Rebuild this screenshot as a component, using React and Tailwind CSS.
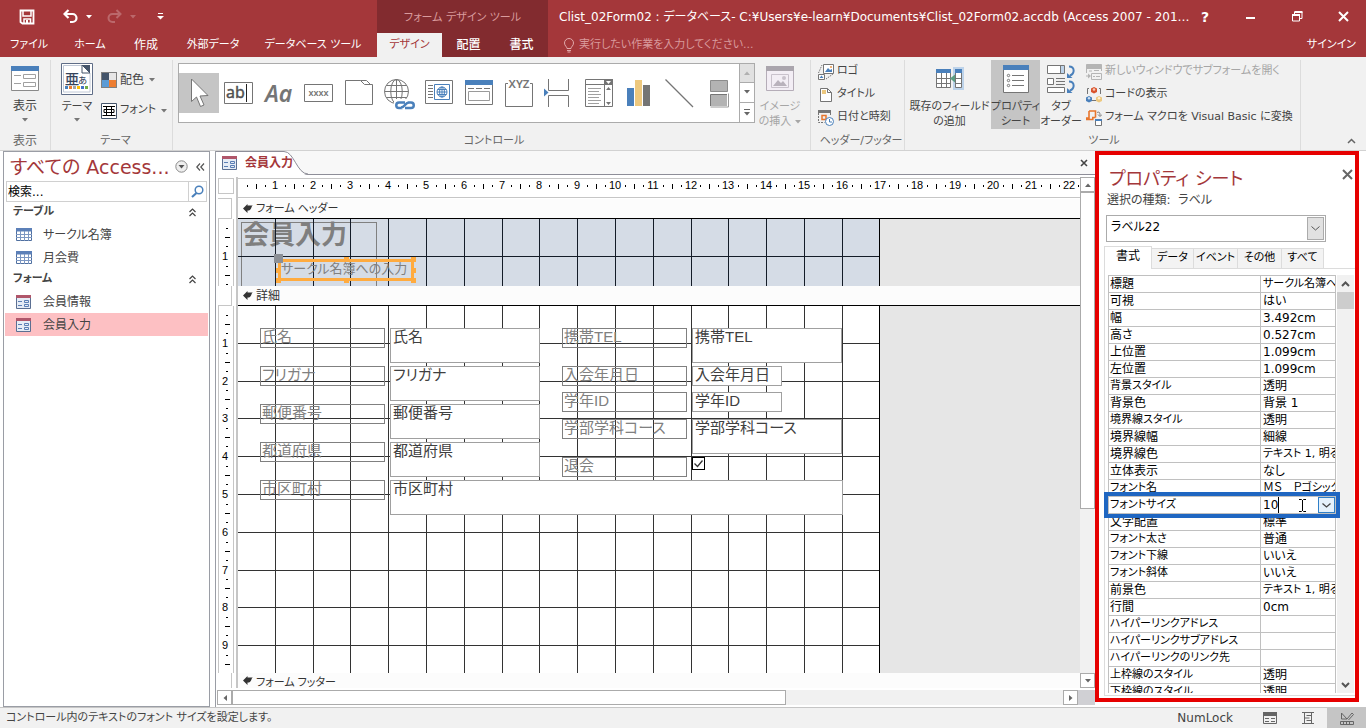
import React from "react";

/* ---------- shared bits ---------- */

const G = "#757575";
const B = "#4a80bb";

function Caret({ className = "" }) {
  return (
    <svg width="6" height="4" viewBox="0 0 6 4" className={className} aria-hidden="true">
      <path d="M0 0h6L3 3.5z" fill="currentColor" />
    </svg>
  );
}

function Svg({ w = 40, h = w, children, className = "shrink-0" }) {
  return (
    <svg width={w} height={h} viewBox={`0 0 ${w} ${h}`} className={className} fill="none" aria-hidden="true">
      {children}
    </svg>
  );
}

/* ---------- title bar ---------- */

const MAIN_TABS = [
  ["ファイル", "w-[58px]"],
  ["ホーム", "w-16"],
  ["作成", "w-12 text-xs"],
  ["外部データ", "w-[86px]"],
  ["データベース ツール", "w-[114px]"],
];

function QuickAccess() {
  return (
    <div className="flex h-[33px] items-center pl-[19px]">
      <button aria-label="上書き保存" className="flex w-10">
        <Svg w={16}>
          <path d="M2 1.5h12.5v13H3.5L1.5 13V1.5z" stroke="#fff" strokeWidth="1.8" />
          <path d="M4 2v5h8V2M5 14.500V10h6.500v4.500" stroke="#fff" strokeWidth="1.5" />
          <path d="M7 11h2v3H7z" fill="#fff" />
        </Svg>
      </button>
      <button aria-label="元に戻す" className="ml-1 flex w-[42px] items-center gap-2 text-white">
        <Svg w={15}>
          <path d="M5.500 1L1.500 5l4 4M2 5h7.500a4 4 0 0 1 0 8H7" stroke="#fff" strokeWidth="2.200" />
        </Svg>
        <Caret />
      </button>
      <button aria-label="やり直し" className="ml-0.5 flex w-12 items-center gap-2 text-[#bb686b]">
        <Svg w={15}>
          <path d="M9.500 1l4 4-4 4M13 5H5.500a4 4 0 0 0 0 8H8" stroke="#bb686b" strokeWidth="2" />
        </Svg>
        <Caret />
      </button>
      <button aria-label="カスタマイズ" className="ml-0.5 text-white">
        <Svg w={7} h={7}>
          <path d="M1 .5h5" stroke="#fff" />
          <path d="M0 3h7L3.500 6.500z" fill="#fff" />
        </Svg>
      </button>
    </div>
  );
}

function TitleBar() {
  return (
    <header className="flex h-[57px] shrink-0 bg-[#a4373a] text-white">
      <div className="w-[377px] shrink-0">
        <QuickAccess />
        <nav className="flex h-6 text-[11px]">
          {MAIN_TABS.map(([t, w]) => (
            <button key={t} className={`${w} whitespace-nowrap text-center`}>{t}</button>
          ))}
        </nav>
      </div>
      <div className="w-[171px] shrink-0 bg-[#822b2f]">
        <div className="h-[33px] pt-0.5 text-center text-[11px] leading-[32px] text-[#d99a9c]">フォーム デザイン ツール</div>
        <nav className="flex h-6">
          <button className="w-[65px] bg-[#f1f1f1] text-[11px] text-[#a4373a]">デザイン</button>
          <button className="flex-1 font-medium">配置</button>
          <button className="flex-1 font-medium">書式</button>
        </nav>
      </div>
      <div className="min-w-0 flex-1">
        <div className="flex h-[33px] items-center">
          <h1 className="min-w-0 flex-1 whitespace-nowrap pl-[11px]">
            Clist_02Form02 : データベース- C:¥Users¥e-learn¥Documents¥Clist_02Form02.accdb (Access 2007 - 201…
          </h1>
          <button className="w-[46px] text-sm font-bold" aria-label="ヘルプ">?</button>
          <button className="flex w-[46px] justify-center" aria-label="最小化">
            <Svg w={10}><path d="M0 6h9" stroke="#fff" strokeWidth="2" /></Svg>
          </button>
          <button className="flex w-[46px] justify-center" aria-label="元に戻す (縮小)">
            <Svg w={11}>
              <path d="M.5 4h7v6h-7zM2.500 4V1h7.500v6.500H7.500" stroke="#fff" />
              <path d="M0 4h8M2.500 1h8" stroke="#fff" strokeWidth="2" />
            </Svg>
          </button>
          <button className="flex w-[46px] justify-center" aria-label="閉じる">
            <Svg w={11}><path d="M1 1l9 9M10 1l-9 9" stroke="#fff" strokeWidth="2" /></Svg>
          </button>
        </div>
        <div className="flex h-6 items-center pl-[15px] pr-[10px] text-[11px]">
          <Svg w={12} h={15}>
            <path d="M4 10.500C4 8.500 1.500 8 1.500 5a4.500 4.500 0 0 1 9 0c0 3-2.500 3.500-2.500 5.500zM4 12.500h4M4.500 14h3" stroke="#e0a9ab" />
          </Svg>
          <input
            aria-label="操作アシスト"
            placeholder="実行したい作業を入力してください..."
            className="ml-1 min-w-0 flex-1 bg-transparent text-white outline-none placeholder:text-[#d99a9c]"
          />
          <button>サインイン</button>
        </div>
      </div>
    </header>
  );
}

/* ---------- ribbon ---------- */

const Globe = ({ cx, cy, r, c }) => (
  <g stroke={c}>
    <circle cx={cx} cy={cy} r={r} />
    <ellipse cx={cx} cy={cy} rx={r * 0.48} ry={r} />
    <path d={`M${cx} ${cy - r}V${cy + r}M${cx - r} ${cy}H${cx + r}M${cx - r * 0.86} ${cy - r / 2}H${cx + r * 0.86}M${cx - r * 0.86} ${cy + r / 2}H${cx + r * 0.86}`} />
  </g>
);

const GALLERY = [
  ["選択", <path d="M12.500 6v22.500l5-4.500 4 9.500 3.500-1.500-4-9 8-.5z" fill="#fff" stroke={G} />],
  ["テキスト ボックス", <>
    <path d="M5.500 9.500h28v21h-28z" stroke={G} />
    <text x="7" y="25" fontSize="16" fill="#505050" stroke="#505050" strokeWidth=".4" fontFamily="Noto Sans">ab</text>
    <path d="M27.500 11v18" stroke="#222" />
  </>],
  ["ラベル", <text x="6" y="29" fontSize="23" fontStyle="italic" fontWeight="600" fill={G} fontFamily="Noto Sans">Aa</text>],
  ["ボタン", <>
    <path d="M5.500 11.500h28v17h-28z" stroke={G} />
    <text x="19.500" y="23" fontSize="9" textAnchor="middle" fontWeight="600" fill={G} fontFamily="Noto Sans">xxxx</text>
  </>],
  ["タブ コントロール", <path d="M6.500 31.500V7.500h15l4 4h8v20zM21.500 7.500h6l4 4" stroke={G} />],
  ["ハイパーリンク", <>
    <Globe cx={17.5} cy={18.5} r={12} c={G} />
    <path d="M15 26h22v11H15z" fill="#fff" />
    <path d="M26 29.500h-6a2.700 2.700 0 0 0 0 5.500h3.500M26 35h6a2.700 2.700 0 0 0 0-5.500h-3.500M22 34.500c4 0 4-5 8-5" stroke={B} strokeWidth="2.500" />
  </>],
  ["Web ブラウザー", <>
    <path d="M6.500 7.500h27v23h-27z" stroke={G} />
    <path d="M9 12.500h5M9 15.500h5M9 18.500h5M9 21.500h5M9 24.500h5" stroke={G} />
    <path d="M15.500 11.500h15v15h-15z" stroke={B} />
    <Globe cx={23} cy={19} r={5} c={B} />
  </>],
  ["ナビゲーション", <>
    <path d="M6.500 7.500h27v24h-27z" stroke={G} />
    <path d="M6 7h28v5H6z" fill={B} />
    <path d="M9 15.500h6M17 15.500h6M25 15.500h6" stroke={G} />
    <path d="M9.500 18.500h21v9h-21z" stroke="#9a9a9a" />
  </>],
  ["オプション グループ", <>
    <path d="M9 10.500H6.500v23h27v-23H31" stroke={G} />
    <text x="20" y="15" fontSize="11.500" textAnchor="middle" fontWeight="600" fill={G} fontFamily="Noto Sans">XYZ</text>
  </>],
  ["改ページ", <>
    <path d="M9.500 6v11.500h20V6M9.500 34V22.500h20V34" stroke={G} />
    <path d="M5 15.500v8l4.500-4z" fill={B} />
  </>],
  ["コンボ ボックス", <>
    <path d="M6.500 6.500h27v27h-27zM6.500 11.500h19M25.500 6.500v27" stroke={G} />
    <path d="M25 6h9v6h-9z" fill={G} />
    <path d="M27 8h5l-2.500 3z" fill="#fff" />
    <path d="M9 15.500h13M9 18.500h11M9 21.500h13M9 24.500h11M9 27.500h13M9 30.500h11" stroke="#a0a0a0" />
    <path d="M27 17h5l-2.500-3zM27 29h5l-2.500 3z" fill={G} />
  </>],
  ["グラフ", <>
    <path d="M8 15h7v18H8z" fill={B} />
    <path d="M16 7h7v26h-7z" fill="#edc87e" />
    <path d="M24 12h7v21h-7z" fill={G} />
  </>],
  ["線", <path d="M6.500 6.500l27.500 27.500" stroke={G} strokeWidth="1.200" />],
  ["トグル ボタン", <>
    <path d="M11.500 7.500h17v11h-17z" fill="#b3b3b3" stroke="#8c8c8c" />
    <path d="M12 22h16v11H12z" fill="#b3b3b3" />
    <path d="M11.500 33V21.500H28" stroke={G} />
    <path d="M29.500 20.500v13.500h-18" stroke="#9a9a9a" />
  </>],
];

function Gallery() {
  return (
    <div className="flex h-[60px] border border-[#ababab] bg-white">
      <div className="flex items-center">
        {GALLERY.map(([name, art], i) => (
          <button key={name} aria-label={name} className={i === 0 ? "bg-[#c5c5c5]" : ""}>
            <Svg w={40}>{art}</Svg>
          </button>
        ))}
      </div>
      <div className="grid w-[15px] grid-rows-3 divide-y divide-[#ababab] border-l border-[#ababab] text-[#666]">
        <button aria-label="上へ" className="flex items-center justify-center bg-[#e1e1e1] text-[#b0b0b0]"><Caret className="rotate-180" /></button>
        <button aria-label="下へ" className="flex items-center justify-center"><Caret /></button>
        <button aria-label="その他" className="flex flex-col items-center justify-center gap-0.5"><span className="h-px w-1.5 bg-[#666]" /><Caret /></button>
      </div>
    </div>
  );
}

function Group({ label, className, children }) {
  return (
    <section className={`flex flex-col border-r border-[#dcdcdc] ${className}`}>
      <div className="flex flex-1">{children}</div>
      <div className="h-[18px] whitespace-nowrap text-center leading-[18px] text-[#666]">{label}</div>
    </section>
  );
}

function SmallButton({ icon, children, muted, caret }) {
  return (
    <button className={`flex h-[23px] items-center gap-[3px] whitespace-nowrap ${muted ? "text-[#a6a6a6]" : "text-[#444]"}`}>
      {icon}
      {children}
      {caret && <Caret className="ml-0.5 text-[#777]" />}
    </button>
  );
}

function BigButton({ icon, lines, caret, inlineCaret, className = "", muted }) {
  return (
    <button className={`flex h-[69px] flex-col items-center whitespace-nowrap pt-[3px] leading-[15px] ${muted ? "text-[#a6a6a6]" : "text-[#444]"} ${className}`}>
      <span className="mb-1 flex h-8 items-center">{icon}</span>
      {lines.map((l, i) => (
        <span key={l} className="flex items-center gap-1">
          {l}
          {inlineCaret && i === lines.length - 1 && <Caret />}
        </span>
      ))}
      {caret && <Caret className="mt-1 text-[#777]" />}
    </button>
  );
}

function Ribbon() {
  return (
    <div className="flex h-[94px] shrink-0 border-b border-[#d2d2d2] bg-[#f1f1f1] pt-[3px] text-[11px] text-[#444]">
      <Group label="表示" className="w-[51px] shrink-0 text-xs">
        <BigButton className="w-full" lines={["表示"]} caret icon={
          <Svg w={28} h={26}>
            <path d="M.5.5h27v24H.5z" fill="#fff" stroke="#8a8a8a" />
            <path d="M0 0h28v5H0z" fill={B} />
            <path d="M3 9.500h7M3 17.500h7M12.500 8.500h12v4h-12zM12.500 16.500h12v4h-12z" stroke="#a0a0a0" />
          </Svg>
        } />
      </Group>
      <Group label="テーマ" className="w-[122px] shrink-0 pl-2">
        <BigButton className="ml-0.5 w-8" lines={["テーマ"]} caret icon={
          <Svg w={32}>
            <path d="M.5.5h31v31H.5z" fill="#fff" stroke="#5f6d87" />
            <path d="M2.500 2.500h19l7.500 7.500v19h-26.500z" stroke="#c0c8d6" />
            <path d="M21 2h8v8h-8z" fill="#44546a" /><path d="M21 2v8h8z" fill="#fff" stroke="#44546a" />
            <text x="4" y="21" fontSize="14" fill="#34425a" stroke="#34425a" strokeWidth=".3" fontFamily="Noto Sans CJK JP">亜</text>
            <text x="17" y="21" fontSize="11" fill="#34425a" fontFamily="Noto Sans CJK JP">ぁ</text>
            <path d="M4 23h3v3H4z" fill={B} /><path d="M8 23h3v3H8z" fill="#ed7d31" />
            <path d="M12 23h3v3h-3z" fill="#a5a5a5" /><path d="M16 23h3v3h-3z" fill="#ffc000" />
            <path d="M20 23h3v3h-3z" fill="#4472c4" /><path d="M24 23h3v3h-3z" fill="#70ad47" />
          </Svg>
        } />
        <div className="ml-2 flex flex-col gap-2 pt-2">
          <SmallButton caret icon={
            <Svg w={16}>
              <path d="M0 0h16v16H0z" fill="#7f7f7f" />
              <path d="M1 1h7v7H1z" fill="#44546a" /><path d="M8 1h7v7H8z" fill="#e7e6e6" />
              <path d="M1 8h7v7H1z" fill="#5b9bd5" /><path d="M8 8h7v7H8z" fill="#ed7d31" />
            </Svg>
          }><span className="text-xs">配色</span></SmallButton>
          <SmallButton caret icon={
            <Svg w={16}>
              <path d="M.5.5h15v15H.5z" fill="#fff" stroke="#44546a" />
              <path d="M2 3.500h12M5.500 3.500v9M10.500 3.500v9M3 6.500h10v3H3zM1.500 12.500h13" stroke="#000" />
            </Svg>
          }>フォント</SmallButton>
        </div>
      </Group>
      <Group label="コントロール" className="w-[638px] shrink-0 pl-[5px]">
        <div className="pt-[3px]"><Gallery /></div>
        <BigButton muted inlineCaret className="w-[50px]" lines={["イメージ", "の挿入"]} icon={
          <Svg w={28} h={26}>
            <path d="M.5.5h27v24H.5z" fill="#f3eef5" stroke="#b5adb8" />
            <path d="M0 0h28v5H0z" fill="#aaa5ad" />
            <path d="M5.500 8.500h17v13h-17z" stroke="#c9c2cc" />
            <path d="M7 20l5-6 3 3 2-2 4 5z" fill="#b9b2bc" /><circle cx="18" cy="12" r="2" fill="#c9c2cc" />
          </Svg>
        } />
      </Group>
      <Group label="ヘッダー/フッター" className="w-[94px] shrink-0 pl-[7px]">
        <div className="flex flex-col">
          <SmallButton icon={
            <Svg w={16}>
              <path d="M5.500.5h10v9h-10z" fill="#fff" stroke={G} />
              <path d="M7 8l3-4 2 2 2-1v3z" fill={B} /><circle cx="13" cy="3" r="1" fill="#ed9b4e" />
              <path d="M.5 10.500h6v5h-6z" fill="#fff" stroke={G} />
              <path d="M1.500 14l2-2.500 2 2.500z" fill={B} />
              <path d="M.5 9L4 1M8 15l7-5" stroke={G} strokeDasharray="1.500 1" />
            </Svg>
          }>ロゴ</SmallButton>
          <SmallButton icon={
            <Svg w={16}>
              <path d="M2.500 1.500h7l4 4v9h-11z" fill="#fff" stroke={G} /><path d="M9.500 1.500v4h4" stroke={G} />
              <path d="M4 3h4v4H4z" fill="#edc87e" />
            </Svg>
          }>タイトル</SmallButton>
          <SmallButton icon={
            <Svg w={16}>
              <path d="M0 0h13v3H0z" fill={G} /><path d="M.5 3v9.500h6M12.500 3v3" stroke={G} strokeDasharray="2 1" />
              <path d="M4 5.500h4v4H4z" stroke="#e8762d" strokeWidth="1.500" />
              <circle cx="11.500" cy="11.500" r="4" fill="#fff" stroke={B} /><path d="M11.500 9v3h2.500" stroke={B} />
            </Svg>
          }>日付と時刻</SmallButton>
        </div>
      </Group>
      <Group label="ツール" className="w-[396px] shrink-0 pl-[3px]">
        <BigButton className="w-[83px]" lines={["既存のフィールド", "の追加"]} icon={
          <Svg w={28} h={24}>
            <path d="M17 0h11v23H17z" fill="#bdd3ea" />
            <path d="M.5 2.500h14v18H.5zM5.500 6v15M10.500 6v15M.5 11.500h14M.5 16.500h14M19.500 2.500h6v18h-6zM19.500 11.500h6M19.500 16.500h6" fill="#fff" stroke={G} />
            <path d="M0 2h15v4H0zM19 2h7v4h-7z" fill={B} /><path d="M19 7.500v8l-5-4z" fill="#5a9e83" />
          </Svg>
        } />
        <BigButton className="w-[49px] bg-[#c5c5c5]" lines={["プロパティ", "シート"]} icon={
          <Svg w={26} h={28}>
            <path d="M.5.5h25v27H.5z" fill="#fff" stroke={G} /><path d="M0 0h26v5H0z" fill={B} />
            <path d="M9 10.500h12M9 15.500h12M9 20.500h12" stroke={G} />
            <circle cx="5.500" cy="10.500" r="1.200" stroke={G} /><circle cx="5.500" cy="15.500" r="1.200" stroke={G} /><circle cx="5.500" cy="20.500" r="1.200" stroke={G} />
          </Svg>
        } />
        <BigButton className="w-[42px]" lines={["タブ", "オーダー"]} icon={
          <Svg w={28} h={29}>
            <path d="M.5.5h17v8H.5zM.5 13.500h6v6h-6zM.5 22.500h17v5H.5z" fill="#fff" stroke={G} />
            <path d="M14 1h3v7h-3z" fill="#bdd3ea" /><path d="M13.500 1v7M9 13.500h9M9 16.500h9M9 19.500h9" stroke={G} />
            <path d="M22 1.500c6 0 6 7 1 9M22 16.500c6 0 6 7 1 9" stroke={B} strokeWidth="2" />
            <path d="M20 8v5h5.500zM20 23v5h5.500z" fill={B} />
          </Svg>
        } />
        <div className="ml-1 flex flex-col">
          <SmallButton muted icon={
            <Svg w={16}>
              <path d="M.5.5h15v4H.5z" fill="#b5b5b5" stroke="#b5b5b5" /><path d="M.5 4v5M15.500 4v3M3 7h3M8 6.500h5" stroke="#b5b5b5" />
              <path d="M5.500 9.500h10v6h-10zM7 12.500h2M10 12.500h4M0 12h4" stroke="#b5b5b5" /><path d="M2 9.500l3 2.500-3 2.500z" fill="#b5b5b5" />
            </Svg>
          }>新しいウィンドウでサブフォームを開く</SmallButton>
          <SmallButton icon={
            <Svg w={16}>
              <path d="M3 1.500H1.500V7M13 1.500h1.500V7M6 13.500h4" stroke={G} />
              <path d="M8 0l3 1.500v3.500L8 6.500 5 5V1.500z" fill="#d9532c" /><circle cx="8" cy="2.500" r="1.300" fill="#f6c9b8" />
              <path d="M3 9l3 1.500V14l-3 1.500L0 14v-3.500z" fill={B} /><circle cx="3" cy="11.300" r="1.200" fill="#cfe0f2" />
              <path d="M13 9l3 1.500V14l-3 1.500-3-1.500v-3.500z" fill="#edc87e" /><circle cx="13" cy="11.300" r="1.200" fill="#fff2d6" />
            </Svg>
          }>コードの表示</SmallButton>
          <SmallButton icon={
            <Svg w={16}>
              <path d="M3 1h6.500v6.500M3 1v7H.8v1.500h6V7.500h2.700" stroke="#e8762d" strokeWidth="1.600" />
              <path d="M11 2.500c2.500-1 3 0 3 3M12 4.500l2 2 2-2" stroke={G} />
              <path d="M9.500 9.500h6v6h-6z" fill="#fff" stroke={G} /><path d="M9 9h7v2H9z" fill={B} />
            </Svg>
          }>フォーム マクロを Visual Basic に変換</SmallButton>
        </div>
      </Group>
      <div className="flex flex-1 items-end justify-end pb-1.5 pr-2.5">
        <button aria-label="リボンを折りたたむ"><Svg w={9} h={6}><path d="M1 5l3.500-3.500L8 5" stroke="#666" strokeWidth="1.500" /></Svg></button>
      </div>
    </div>
  );
}

/* ---------- navigation pane ---------- */

function TableIcon() {
  return (
    <Svg w={16} h={13}>
      <path d="M.5.5h15v12H.5z" fill="#fff" stroke="#4f6f9f" /><path d="M0 0h16v3.500H0z" fill="#5c80b8" />
      <path d="M4.500 3v10M8.500 3v10M12.500 3v10M0 6.500h16M0 9.500h16" stroke="#7c97c2" />
    </Svg>
  );
}

function FormIcon() {
  return (
    <Svg w={15} h={14}>
      <path d="M.5.5h14v13H.5z" fill="#e6ecf5" stroke="#5b6f92" /><path d="M0 0h15v3H0z" fill="#b0566a" />
      <path d="M2 6.500h4M2 10.500h4M8.500 5.500h4v2h-4zM8.500 9.500h4v2h-4z" stroke="#5b7fb5" />
    </Svg>
  );
}

function NavSection({ title, Icon, items, selected }) {
  return (
    <section>
      <h3 className="flex h-[21px] items-center justify-between pl-[9px] pr-3 text-[11px] font-bold text-[#444]">
        {title}
        <Svg w={9} h={9}><path d="M1.500 4l3-3 3 3M1.500 8l3-3 3 3" stroke="#444" strokeWidth="1.200" /></Svg>
      </h3>
      <ul>
        {items.map((t) => (
          <li key={t}>
            <button className={`ml-px flex h-[23px] w-[203px] items-center pl-[11px] text-[#444] ${t === selected ? "bg-[#fdc0c3]" : ""}`}>
              <span className="w-[27px]"><Icon /></span>
              {t}
            </button>
          </li>
        ))}
      </ul>
    </section>
  );
}

function NavPane() {
  return (
    <aside className="ml-[3px] mr-[5px] w-[207px] shrink-0 border border-[#9a9da5] bg-white">
      <div className="flex h-[29px] items-center pl-1.5 text-[#a4373a]">
        <h2 className="flex-1 whitespace-nowrap text-[19px] leading-7">すべての Access...</h2>
        <button aria-label="メニュー" className="mr-2">
          <Svg w={13}><circle cx="6.500" cy="6.500" r="5.700" fill="#eee" stroke="#8a8a8a" /><path d="M3.500 5h6l-3 3.500z" fill="#555" /></Svg>
        </button>
        <button aria-label="折りたたむ" className="mr-1">
          <Svg w={9} h={8}><path d="M4 .5L.8 4 4 7.500M8 .5L4.800 4 8 7.500" stroke="#555" strokeWidth="1.200" /></Svg>
        </button>
      </div>
      <div className="mx-0.5 flex h-[21px] border border-[#d0d0d0]">
        <input aria-label="検索" placeholder="検索..." className="min-w-0 flex-1 px-px outline-none placeholder:text-black" />
        <button aria-label="検索開始" className="flex w-[18px] items-center justify-center border-l border-[#d0d0d0]">
          <Svg w={13}><circle cx="8" cy="5" r="3.800" stroke={B} strokeWidth="1.500" /><path d="M5.500 8L1 12" stroke={B} strokeWidth="2.200" /></Svg>
        </button>
      </div>
      <NavSection title="テーブル" Icon={TableIcon} items={["サークル名簿", "月会費"]} />
      <NavSection title="フォーム" Icon={FormIcon} items={["会員情報", "会員入力"]} selected="会員入力" />
    </aside>
  );
}

/* ---------- form designer ---------- */

const CM = 37.8;
const at = (n) => Math.round(n * CM) - 1;
const range = (n) => Array.from({ length: n }, (_, i) => i + 1);

function Grid({ rows, color }) {
  return (
    <svg className="absolute left-0 top-0 h-full w-[642px]" shapeRendering="crispEdges" aria-hidden="true">
      <g fill={color}>
        {range(16).map((n) => <rect key={n} x={at(n)} y="0" width="1" height="100%" />)}
        {range(rows).map((n) => <rect key={n} x="0" y={at(n)} width="100%" height="1" />)}
      </g>
      <rect x="641" y="0" width="1" height="100%" fill="#000" />
    </svg>
  );
}

function HRuler() {
  return (
    <svg className="h-full w-full" fontFamily="Liberation Sans" fontSize="11" textAnchor="middle" aria-hidden="true">
      {range(23).map((n) => {
        const x = at(n);
        return (
          <g key={n} fill="#000">
            <rect x={x - 28} y="6" width="1" height="2" />
            <rect x={x - 19} y="5" width="1" height="5" />
            <rect x={x - 10} y="6" width="1" height="2" />
            {n < 23 && <text x={x} y="10">{n}</text>}
          </g>
        );
      })}
    </svg>
  );
}

function VRuler({ rows, className }) {
  return (
    <div className={`border-x border-[#c6c6c6] bg-white ${className}`}>
      <svg className="h-full w-full" fontFamily="Liberation Sans" fontSize="11" textAnchor="middle" aria-hidden="true">
        {range(rows + 1).map((n) => {
          const y = at(n);
          return (
            <g key={n}>
              <rect x="7" y={y - 28} width="2" height="1" />
              <rect x="6" y={y - 19} width="5" height="1" />
              <rect x="7" y={y - 10} width="2" height="1" />
              {n <= rows && <text x="6" y={y + 4}>{n}</text>}
            </g>
          );
        })}
      </svg>
    </div>
  );
}

function SectionBar({ children, className = "" }) {
  return (
    <div className={`flex shrink-0 gap-[3px] bg-[#fcfcfc] pl-[5px] text-[#333] ${className}`}>
      <Svg w={10} h={9} className="shrink-0 self-center"><path d="M0 4.500L4.500 0v1.500H10C8 2 9 5.500 6 6.500H4.500V9z" fill="#333" /></Svg>
      {children}
    </div>
  );
}

const FIELDS = [
  ["氏名", "left-[22px] top-[22px]", "left-[152px] top-[22px] h-[35px] w-[150px]"],
  ["フリガナ", "left-[22px] top-[60px]", "left-[152px] top-[60px] h-[35px] w-[150px]"],
  ["郵便番号", "left-[22px] top-[98px]", "left-[152px] top-[98px] h-[35px] w-[150px]"],
  ["都道府県", "left-[22px] top-[136px]", "left-[152px] top-[136px] h-[35px] w-[150px]"],
  ["市区町村", "left-[22px] top-[174px]", "left-[152px] top-[174px] h-[35px] w-[453px]"],
  ["携帯TEL", "left-[324px] top-[22px]", "left-[454px] top-[22px] h-[35px] w-[150px]"],
  ["入会年月日", "left-[324px] top-[60px]", "left-[454px] top-[60px] h-5 w-[90px]"],
  ["学年ID", "left-[324px] top-[86px]", "left-[454px] top-[86px] h-5 w-[90px]"],
  ["学部学科コース", "left-[324px] top-[113px]", "left-[454px] top-[113px] h-[35px] w-[150px]"],
];

const LABEL = "absolute h-5 w-[125px] overflow-visible whitespace-nowrap border border-[#808080] pl-px text-[15px] leading-[15px] text-[#808080]";

const HANDLES = [
  "right-[-5px] top-[-5px]", "bottom-[-5px] left-[-5px]", "bottom-[-5px] right-[-5px]",
  "left-[63px] top-[-5px]", "bottom-[-5px] left-[63px]", "right-[-5px] top-[6px]", "left-[-5px] top-[6px]",
];

const PGOTHIC = "font-['Liberation_Sans','Noto_Sans_CJK_JP',sans-serif]";

function HeaderSection() {
  return (
    <div className="relative h-[67px] shrink-0 overflow-hidden bg-[#e6e6e6]">
      <div className="h-full w-[642px] bg-[#d5dce6]" />
      <div className="absolute left-[3px] top-[3px] h-20 w-[136px] border border-[#808080] pl-px text-[26px] font-bold leading-[25px] text-[#7f7f7f]">会員入力</div>
      <Grid rows={1} color="#141c28" />
      <div className="absolute left-[40px] top-[40px] h-[22px] w-[136px] border-[3px] border-[#ffab3f] text-[13px] leading-[13px] text-[#808080]">
        <span className="whitespace-nowrap">サークル名簿への入力</span>
        <span className="absolute left-[-7px] top-[-8px] size-[9px] bg-[#8b8f96]" />
        {HANDLES.map((p) => <span key={p} className={`absolute size-[5px] bg-[#ffab3f] ${p}`} />)}
      </div>
    </div>
  );
}

function DetailSection() {
  return (
    <div className="relative min-h-0 flex-1 overflow-hidden bg-[#e6e6e6]">
      <div className="h-full w-[642px] bg-white" />
      <Grid rows={9} color="#333" />
      {FIELDS.map(([name, l, f]) => (
        <React.Fragment key={name}>
          <label htmlFor={name} className={`${LABEL} ${l}`}>{name}</label>
          <textarea
            id={name}
            defaultValue={name}
            className={`absolute resize-none overflow-hidden whitespace-pre border border-[#a0a0a0] bg-white px-0.5 py-0 text-[15px] leading-[16px] text-[#404040] outline-none ${f}`}
          />
        </React.Fragment>
      ))}
      <label htmlFor="withdrawn" className={`${LABEL} left-[324px] top-[151px]`}>退会</label>
      <input
        id="withdrawn"
        type="checkbox"
        defaultChecked
        className="peer absolute left-[454px] top-[151px] size-[13px] appearance-none border border-black bg-white"
      />
      <svg className="pointer-events-none absolute left-[454px] top-[151px] hidden peer-checked:block" width="13" height="13" fill="none" aria-hidden="true">
        <path d="M2.500 6.500l3 3 5-6" stroke="#333" strokeWidth="1.300" />
      </svg>
    </div>
  );
}

const SB = "flex shrink-0 items-center justify-center border border-[#ababab] bg-white text-[#666]";

function Designer() {
  return (
    <main className="flex min-w-0 flex-1 flex-col border-l border-[#9a9da5] bg-white">
      <div className="flex h-6 shrink-0 items-center border-b border-[#8e8e98] bg-[#f8f8f8] pr-[7px]">
        <div className="relative h-6 flex-1">
          <svg className="absolute left-0 top-0" width="96" height="24" aria-hidden="true">
            <path d="M0 24V.5h68c10 0 13 23.500 24 23.500z" fill="#fff" />
            <path d="M0 .5h68c10 0 13 22.500 24 22.500" fill="none" stroke="#8e8e98" />
          </svg>
          <button className="relative flex h-6 items-center gap-2 pl-1.5 font-bold text-[#a4373a]">
            <FormIcon />
            会員入力
          </button>
        </div>
        <button aria-label="タブを閉じる"><Svg w={8}><path d="M1 1l6 6M7 1L1 7" stroke="#444" strokeWidth="1.600" /></Svg></button>
      </div>
      <div className="flex min-h-0 flex-1 pt-0.5">
        <div className="flex min-w-0 flex-1">
          <div className="flex w-[22px] shrink-0 flex-col border-r-2 border-[#c6c6c6] pl-0.5">
            <div className="mt-px h-4 w-4 border border-[#c6c6c6]" />
            <div className="mt-1 h-[21px] w-3.5 border-b border-r border-t border-[#c6c6c6]" />
            <VRuler rows={1} className="h-[67px] w-4" />
            <div className="h-5 w-3.5 border-b border-r border-[#c6c6c6]" />
            <VRuler rows={9} className="min-h-0 w-4 flex-1" />
            <div className="h-[15px] w-3.5 border-r border-[#c6c6c6]" />
          </div>
          <div className={`flex min-w-0 flex-1 flex-col ${PGOTHIC}`}>
            <div className="my-px h-5 shrink-0 overflow-hidden border-y border-[#c6c6c6]"><HRuler /></div>
            <SectionBar className="h-5 items-center border-b border-black text-[11px]">フォーム ヘッダー</SectionBar>
            <HeaderSection />
            <SectionBar className="h-5 items-center border-b border-black">詳細</SectionBar>
            <DetailSection />
            <SectionBar className="h-[15px] items-end text-[11px] leading-[12px]">フォーム フッター</SectionBar>
          </div>
        </div>
        <div className="flex w-[15px] shrink-0 flex-col bg-[#e6e6e6]">
          <button aria-label="上へスクロール" className={`${SB} h-[15px]`}><Caret className="rotate-180" /></button>
          <div className="h-[62%] border border-[#ababab] bg-white" />
          <div className="flex-1 bg-[#f1f1f1]" />
          <button aria-label="下へスクロール" className={`${SB} h-[15px]`}><Caret /></button>
        </div>
      </div>
      <div className="flex h-[19px] shrink-0 bg-white py-0.5">
        <button aria-label="左へスクロール" className={`${SB} ml-px w-[15px]`}><Caret className="rotate-90" /></button>
        <div className="flex flex-1 bg-[#f1f1f1]"><div className="w-2/3 border border-[#ababab] bg-white" /></div>
        <button aria-label="右へスクロール" className={`${SB} w-[15px]`}><Caret className="-rotate-90" /></button>
        <div className="w-[17px] bg-[#d0d0d4]" />
      </div>
    </main>
  );
}

/* ---------- property sheet ---------- */

const PROPS = [
  ["標題", "サークル名簿への入力"], ["可視", "はい"], ["幅", "3.492cm"], ["高さ", "0.527cm"],
  ["上位置", "1.099cm"], ["左位置", "1.099cm"], ["背景スタイル", "透明"], ["背景色", "背景 1"],
  ["境界線スタイル", "透明"], ["境界線幅", "細線"], ["境界線色", "テキスト 1, 明るい色 50%"], ["立体表示", "なし"],
  ["フォント名", "ＭＳ　Ｐゴシック"], ["フォントサイズ", "10"], ["文字配置", "標準"], ["フォント太さ", "普通"],
  ["フォント下線", "いいえ"], ["フォント斜体", "いいえ"], ["前景色", "テキスト 1, 明るい色 50%"], ["行間", "0cm"],
  ["ハイパーリンクアドレス", ""], ["ハイパーリンクサブアドレス", ""], ["ハイパーリンクのリンク先", ""],
  ["上枠線のスタイル", "透明"], ["下枠線のスタイル", "透明"],
];

const TABS = ["書式", "データ", "イベント", "その他", "すべて"];
const TAB_WIDTHS = ["w-12 text-xs", "w-[42px]", "w-11", "w-11", "w-[42px]"];

/* Long katakana runs are set one size smaller so that they keep to their column. */
const kanaSize = (s) => (/[ァ-ヶー]{3}/.test(s) ? "text-[11px]" : "");

function PropertyRow({ name, value }) {
  const active = name === "フォントサイズ";
  return (
    <tr className="h-[17px]">
      <th scope="row" className="relative w-[152px] overflow-visible border border-[#c0c0c0] p-0 pl-px text-left font-normal">
        <div className={`h-4 overflow-hidden whitespace-nowrap leading-4 ${kanaSize(name)}`}>{name}</div>
        {active && <span className="pointer-events-none absolute left-[-5px] top-[-5px] z-10 h-[26px] w-[236px] border-4 border-[#1f66c1]" />}
      </th>
      <td className="border border-[#c0c0c0] p-0 pl-0.5">
        {active ? (
          <div className="flex h-4 items-center">
            <input aria-label={name} defaultValue={value} className="w-4 shrink-0 border-r border-black leading-4 outline-none" />
            <span className="flex-1" />
            <Svg w={7} h={13}><path d="M0 .5h2.500l1 1 1-1H7M3.500 1v11M0 12.500h2.500l1-1 1 1H7" stroke="#000" /></Svg>
            <button aria-label="一覧を開く" className="ml-3 flex h-4 w-[17px] shrink-0 items-center justify-center border border-[#2f7fc8] bg-[#e5f1fb]">
              <Svg w={9} h={5}><path d="M.5.5l4 3.500 4-3.500" stroke="#444" strokeWidth="1.300" /></Svg>
            </button>
          </div>
        ) : (
          <div className={`h-4 overflow-hidden whitespace-nowrap leading-4 ${kanaSize(value)}`}>{value}</div>
        )}
      </td>
    </tr>
  );
}

function PropertySheet() {
  return (
    <aside className="mb-[5px] mr-[7px] flex w-[264px] shrink-0 flex-col border-4 border-[#e60000] bg-white text-black">
      <div className="flex items-start justify-between pl-2.5 pr-0.5 pt-2.5">
        <h2 className="text-lg leading-7 text-[#a4373a]">プロパティ シート</h2>
        <button aria-label="閉じる" className="pt-1"><Svg w={11}><path d="M1 1l9 9M10 1l-9 9" stroke="#666" strokeWidth="2" /></Svg></button>
      </div>
      <p className="pl-2 leading-[14px] text-[#444]">選択の種類: &nbsp;ラベル</p>
      <div className="relative ml-[7px] mt-2 h-[27px] w-[220px]">
        <select aria-label="オブジェクト" className="h-full w-full appearance-none border border-[#ababab] bg-white pb-1 pl-1 outline-none">
          <option>ラベル22</option>
        </select>
        <span className="pointer-events-none absolute right-0.5 top-0.5 flex h-[23px] w-[17px] items-center justify-center border border-[#ababab] bg-[#e1e1e1]">
          <Svg w={9} h={5}><path d="M.5.5l4 3.500 4-3.500" stroke="#555" /></Svg>
        </span>
      </div>
      <div className="ml-[5px] mt-1 flex items-end text-[11px]" role="tablist">
        {TABS.map((t, i) => (
          <button
            key={t}
            role="tab"
            aria-selected={i === 0}
            className={`${TAB_WIDTHS[i]} whitespace-nowrap border-t border-[#dcdcdc] ${i === 0 ? "h-[23px] border-x bg-white pb-1" : "h-[21px] border-b border-r bg-[#f3f3f3]"}`}
          >
            {t}
          </button>
        ))}
        <span className="flex-1 border-b border-[#dcdcdc]" />
      </div>
      <div className="mb-0.5 ml-[5px] flex min-h-0 flex-1 border-b border-l border-[#dcdcdc] pb-0.5 pl-[3px] pt-1.5">
        <div className="relative w-[229px]">
          <div className="absolute inset-0 overflow-x-visible overflow-y-clip">
            <table className="w-[228px] table-fixed border-collapse">
              <tbody>
                {PROPS.map(([n, v]) => <PropertyRow key={n} name={n} value={v} />)}
              </tbody>
            </table>
          </div>
        </div>
        <div className="flex w-[17px] flex-col items-center bg-[#f1f1f1]">
          <button aria-label="上へ" className="flex h-[17px] items-center"><Svg w={9} h={6}><path d="M1 5l3.500-3.500L8 5" stroke="#555" strokeWidth="2" /></Svg></button>
          <div className="h-[17px] w-full bg-[#cdcdcd]" />
          <div className="flex-1" />
          <button aria-label="下へ" className="flex h-[17px] items-center"><Svg w={9} h={6}><path d="M1 1l3.500 3.500L8 1" stroke="#555" strokeWidth="2" /></Svg></button>
        </div>
      </div>
    </aside>
  );
}

/* ---------- status bar ---------- */

function StatusBar() {
  return (
    <footer className="flex h-[21px] shrink-0 items-center border-t border-[#c6c6c6] bg-[#f1f1f1] pl-1.5 text-[#444]">
      <span className="flex-1 text-[11px]">コントロール内のテキストのフォント サイズを設定します。</span>
      <span className="mr-[18px]">NumLock</span>
      <button aria-label="フォーム ビュー" className="flex w-[38px] justify-center">
        <Svg w={14} h={12}><path d="M.5.5h13v11H.5z" stroke="#666" /><path d="M0 0h14v4H0z" fill="#666" /><path d="M2 6.500h4M2 9.500h4M8 6.500h4M8 9.500h4" stroke="#666" /></Svg>
      </button>
      <button aria-label="レイアウト ビュー" className="flex w-[38px] justify-center">
        <Svg w={12} h={12}><path d="M0 .5h12M0 11.500h12M2.500.5v11M9.500.5v11M4.500 3.500h5M4.500 8.500h5M2.500 6h5" stroke="#666" /></Svg>
      </button>
      <button aria-label="デザイン ビュー" className="flex h-full w-[39px] items-center justify-center bg-[#c5c5c5]">
        <Svg w={14} h={13}><path d="M.5 9.500h13v3H.5zM3.500 10v2M6.500 10v2M9.500 10v2M1.500 1v6H7zM7 7l5-6 1.500 1.500L8.500 8" stroke="#666" /></Svg>
      </button>
    </footer>
  );
}

export default function App() {
  return (
    <div className="flex h-screen flex-col overflow-hidden bg-white font-['DejaVu_Sans','Noto_Sans_CJK_JP',sans-serif] text-xs [font-feature-settings:'palt']">
      <TitleBar />
      <Ribbon />
      <div className="flex min-h-0 flex-1">
        <NavPane />
        <Designer />
        <PropertySheet />
      </div>
      <StatusBar />
    </div>
  );
}
